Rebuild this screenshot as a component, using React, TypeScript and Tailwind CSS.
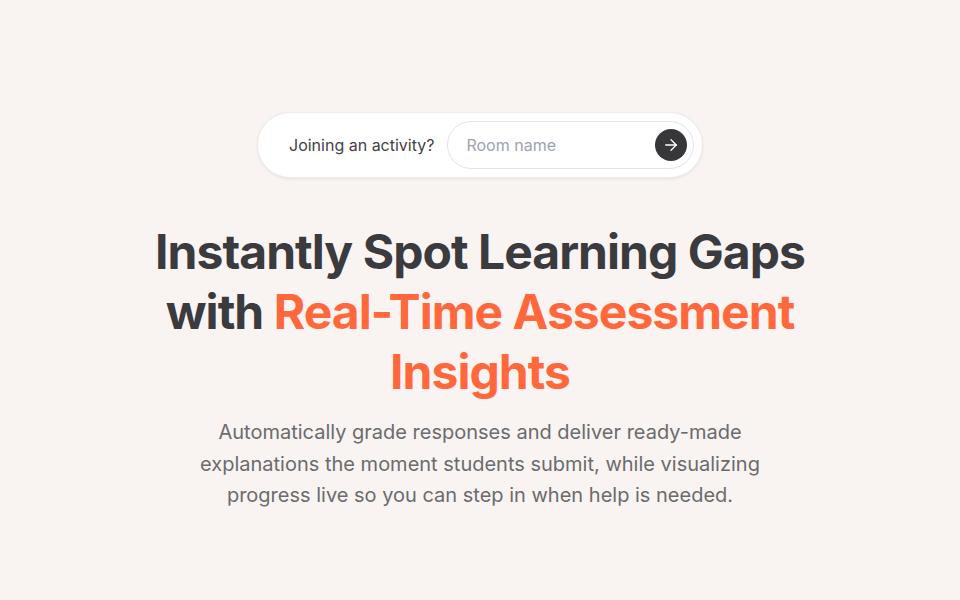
export default function App() {
  return (
    <div className="min-h-screen w-full bg-[#f9f4f1] flex flex-col items-center pt-[112px] font-['Inter',sans-serif]">
      {/* Join room pill */}
      <div className="flex items-center h-[66px] w-[446px] rounded-full bg-white shadow-[0_1px_3px_rgba(0,0,0,0.08)] border border-[#efebe8] pl-[31px] pr-[8px]">
        <span className="text-[16px] text-[#3f3f46] whitespace-nowrap">Joining an activity?</span>
        <div className="ml-[13px] flex flex-1 items-center h-[48px] rounded-full border border-[#e4e4e7] pl-[18px] pr-[6px]">
          <span className="flex-1 text-[16px] text-[#9ca3af]">Room name</span>
          <button className="flex items-center justify-center w-[32px] h-[32px] rounded-full bg-[#36363b] text-white">
            <svg width="18" height="18" viewBox="0 0 24 24" fill="none" stroke="currentColor" strokeWidth="1.75" strokeLinecap="round" strokeLinejoin="round">
              <path d="M5 12h14" />
              <path d="m12 5 7 7-7 7" />
            </svg>
          </button>
        </div>
      </div>

      {/* Headline */}
      <h1 className="mt-[44px] text-center text-[48px] leading-[60px] font-bold tracking-[-0.02em] text-[#3a3a3f] w-[720px]">
        Instantly Spot Learning Gaps
        <br />
        with <span className="text-[#ff683c]">Real-Time Assessment Insights</span>
      </h1>

      {/* Description */}
      <p className="mt-[15px] w-[620px] text-center text-[20px] leading-[31.5px] text-[#6b6b6e]">
        Automatically grade responses and deliver ready-made explanations the moment students submit, while visualizing progress live so you can step in when help is needed.
      </p>
    </div>
  );
}
